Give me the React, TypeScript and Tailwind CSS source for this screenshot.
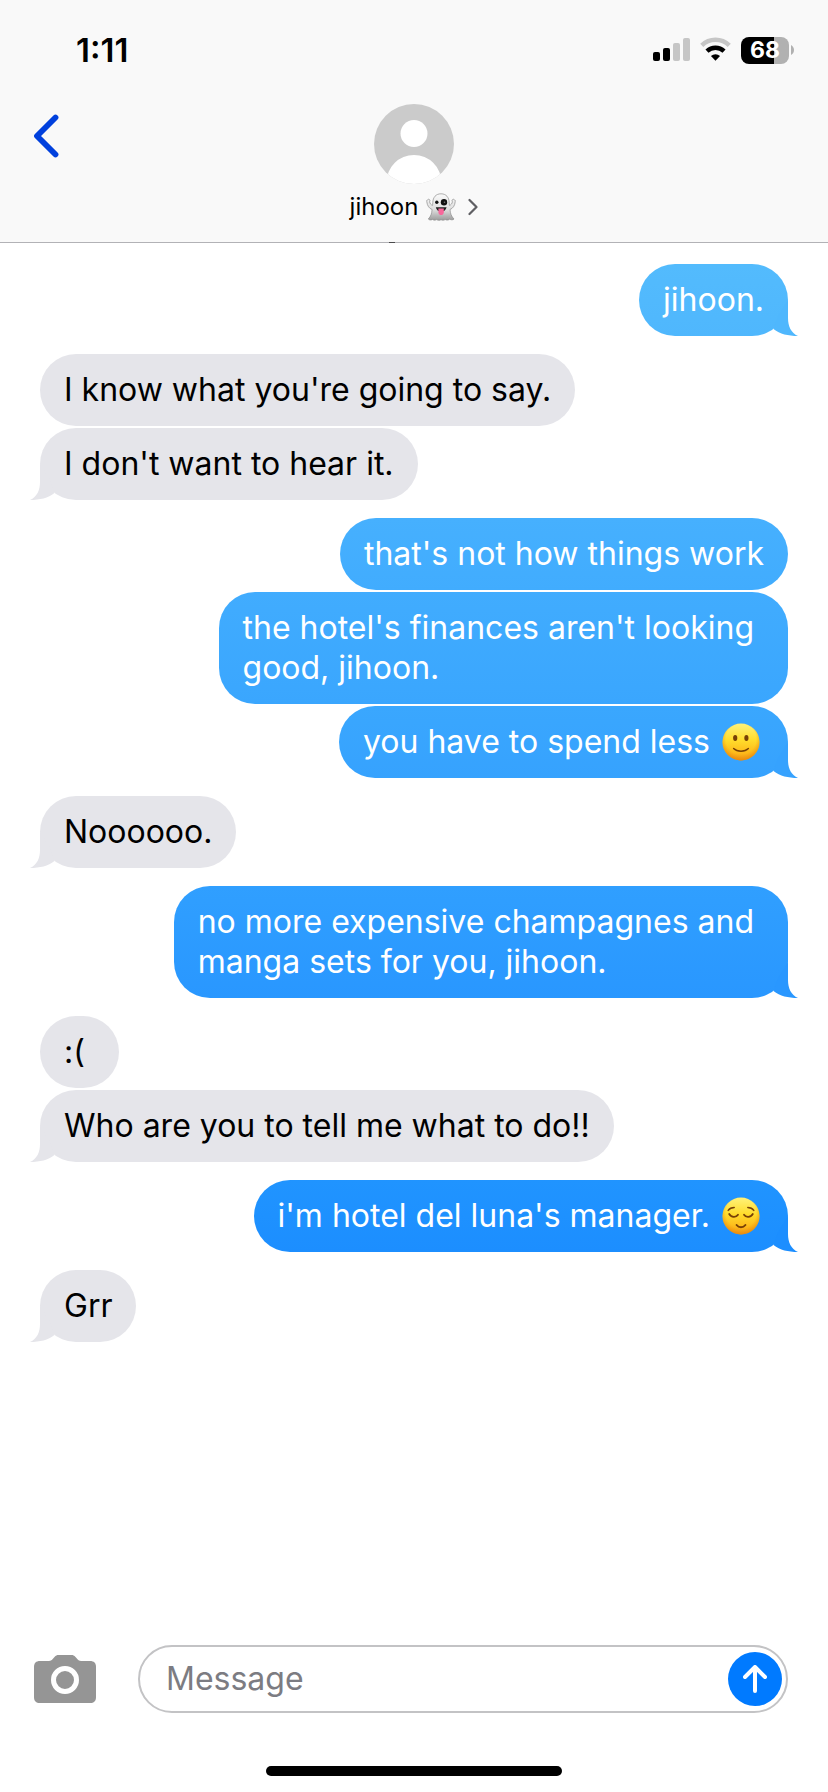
import { useState } from "react";

// ------------------------------------------------------------
// Data
// ------------------------------------------------------------

type EmojiName = "smile" | "relieved";

type Message = {
  text: string;
  emoji?: EmojiName;
  bg?: string;
  tail?: string;
};

type Group = {
  from: "me" | "them";
  messages: Message[];
};

const GROUPS: Group[] = [
  {
    from: "me",
    messages: [
      { text: "jihoon.", bg: "from-[#53bbfd] to-[#4fb7fd]", tail: "text-[#4fb7fd]" },
    ],
  },
  {
    from: "them",
    messages: [
      { text: "I know what you're going to say." },
      { text: "I don't want to hear it." },
    ],
  },
  {
    from: "me",
    messages: [
      { text: "that's not how things work", bg: "from-[#46b0fe] to-[#41acfe]" },
      {
        text: "the hotel's finances aren't looking\ngood, jihoon.",
        bg: "from-[#41acfe] to-[#3aa6fe]",
      },
      {
        text: "you have to spend less",
        emoji: "smile",
        bg: "from-[#3aa7fe] to-[#36a2fe]",
        tail: "text-[#36a2fe]",
      },
    ],
  },
  { from: "them", messages: [{ text: "Noooooo." }] },
  {
    from: "me",
    messages: [
      {
        text: "no more expensive champagnes and\nmanga sets for you, jihoon.",
        bg: "from-[#309fff] to-[#2997ff]",
        tail: "text-[#2997ff]",
      },
    ],
  },
  {
    from: "them",
    messages: [{ text: ":(" }, { text: "Who are you to tell me what to do!!" }],
  },
  {
    from: "me",
    messages: [
      {
        text: "i'm hotel del luna's manager.",
        emoji: "relieved",
        bg: "from-[#2094ff] to-[#1c8eff]",
        tail: "text-[#1c8eff]",
      },
    ],
  },
  { from: "them", messages: [{ text: "Grr" }] },
];

// ------------------------------------------------------------
// Emoji
// ------------------------------------------------------------

function Emoji({ name }: { name: EmojiName }) {
  return (
    <svg
      viewBox="0 0 38 38"
      role="img"
      aria-label={name === "smile" ? "🙂" : "😌"}
      className="mr-1 ml-3 size-[38px] shrink-0"
    >
      <defs>
        <linearGradient id={`${name}-face`} x1="0" y1="0" x2="0" y2="1">
          <stop offset="0" stopColor="#fff27a" />
          <stop offset="0.45" stopColor="#ffdc2c" />
          <stop offset="0.8" stopColor="#fdb91a" />
          <stop offset="1" stopColor="#f09a18" />
        </linearGradient>
        <radialGradient id={`${name}-edge`} cx="0.5" cy="0.42" r="0.58">
          <stop offset="0.7" stopColor="#f09a10" stopOpacity="0" />
          <stop offset="1" stopColor="#e88408" stopOpacity="0.8" />
        </radialGradient>
      </defs>
      <circle cx="19" cy="19" r="18.5" fill={`url(#${name}-face)`} />
      <circle cx="19" cy="19" r="18.5" fill={`url(#${name}-edge)`} />
      {name === "smile" ? (
        <>
          <ellipse cx="13.2" cy="15" rx="2.1" ry="3" fill="#774006" />
          <ellipse cx="24.4" cy="15" rx="2.1" ry="3" fill="#774006" />
          <path
            d="M11.6 25.6c3.6 3.6 11.2 3.6 14.8 0"
            fill="none"
            stroke="#774006"
            strokeWidth="1.4"
            strokeLinecap="round"
          />
        </>
      ) : (
        <g fill="none" stroke="#774006" strokeWidth="1.5" strokeLinecap="round">
          <path d="M6.200 13.400c1.400-2 3.400-3 6-3M31.800 13.400c-1.400-2-3.400-3-6-3" />
          <path d="M7.200 17c2 3.600 7 3.600 8.800.8M30.800 17c-2 3.600-7 3.600-8.800.8" strokeWidth="1.8" />
          <path d="M14.6 28c2.400 3 6.400 3 8.800 0" strokeWidth="2" />
        </g>
      )}
    </svg>
  );
}

function Ghost() {
  return (
    <svg viewBox="0 0 30 28" role="img" aria-label="👻" className="h-7 w-[30px]">
      <defs>
        <linearGradient id="ghost" x1="0" y1="0" x2="0" y2="1">
          <stop offset="0" stopColor="#fafafa" />
          <stop offset="0.6" stopColor="#dedede" />
          <stop offset="1" stopColor="#9b9b9b" />
        </linearGradient>
      </defs>
      <path
        d="M15 .8c5.2 0 8 3.6 8.2 8.6l.2 3c1.700-.6 2.700-1.800 3-3.600-.7-1.200-.4-2.400.5-2.200.6-.6 1.200-.2 1.300.3.900-.1 1.300.8 1 1.800-.3 4-2.400 6.800-5.200 7.800.3 4 1.400 7 4 9.500-1.300 1.300-3.200.8-4.400.2-1.400 1.100-3.100 1.100-4.400.3-1.300.9-3 .9-4.200.2-1.400.8-3.200.8-4.500-.1-1.300.8-2.900.7-4-.2-1.300.7-3 .9-4.200-.4 2.500-2.500 3.500-5.500 3.800-9.500C3.200 15.500 1.200 12.700.8 8.700c-.3-1 .1-1.900 1-1.800.1-.5.700-.9 1.300-.3.900-.2 1.200 1 .5 2.200.3 1.800 1.300 3 3 3.600l.2-3C7 4.400 9.800.8 15 .8Z"
        fill="url(#ghost)"
        stroke="#8d8d8d"
        strokeWidth="0.7"
      />
      <circle cx="10.800" cy="9.200" r="1.700" fill="#111" />
      <circle cx="18" cy="9.200" r="3.200" fill="#111" />
      <circle cx="18.500" cy="9.200" r="0.8" fill="#777" />
      <path d="M9.800 14.200h10.800c-.6 2.700-2.600 4.300-5.400 4.300s-4.800-1.600-5.400-4.300Z" fill="#222" />
      <path d="M12.400 15.400h5.400v3.800c0 1.800-1.200 2.900-2.700 2.900s-2.700-1.100-2.700-2.900Z" fill="#f7689b" />
    </svg>
  );
}

// ------------------------------------------------------------
// Header
// ------------------------------------------------------------

function StatusBar() {
  return (
    <div className="flex h-8 items-center justify-between pr-[34px] pl-[76px]">
      <span className="text-[33px] leading-8 font-semibold">1:11</span>
      <div className="flex items-center gap-[10px]">
        <svg viewBox="0 0 37 28" className="h-7 w-[37px]" aria-hidden="true">
          <rect x="0" y="16" width="7" height="9" rx="2" />
          <rect x="10" y="12" width="7" height="13" rx="2" />
          <rect x="20" y="7" width="7" height="18" rx="2" fill="#c6c6c6" />
          <rect x="30" y="2" width="7" height="23" rx="2" fill="#c6c6c6" />
        </svg>
        <svg viewBox="0 0 32 28" className="h-7 w-[31px]" aria-hidden="true">
          <g fill="none" strokeWidth="4.600">
            <path d="M1.800 9.200a20.500 20.500 0 0 1 28.400 0" stroke="#c6c6c6" />
            <path d="M7.200 15.200a12.800 12.800 0 0 1 17.600 0" stroke="#000" />
          </g>
          <path d="M16 25.200l-4.700-4.900a7 7 0 0 1 9.400 0Z" />
        </svg>
        <div className="flex items-center gap-[2px]">
          <div className="flex h-[27px] w-12 items-center justify-center rounded-lg bg-linear-to-r from-black from-69% to-[#b1b1b1] to-69%">
            <span className="text-[23px] leading-6 font-bold text-white">68</span>
          </div>
          <svg viewBox="0 0 3 10" className="h-[10px] w-[3px]" aria-hidden="true">
            <path d="M0 0c4 2 4 8 0 10Z" fill="#b1b1b1" />
          </svg>
        </div>
      </div>
    </div>
  );
}

function Header() {
  return (
    <header className="relative border-b border-[#b2b2b6] bg-[#f9f9f9] pt-[34px]">
      <StatusBar />
      <div className="mt-[38px] grid grid-cols-[1fr_auto_1fr] items-start px-8 pb-5">
        <button type="button" aria-label="Back" className="mt-[10px] w-7">
          <svg viewBox="0 0 28 44" className="h-11 w-7">
            <path
              d="M23.500 3.500L5 22l18.500 18.500"
              fill="none"
              stroke="#0040dd"
              strokeWidth="5.800"
              strokeLinecap="round"
              strokeLinejoin="round"
            />
          </svg>
        </button>
        <button type="button" className="flex flex-col items-center gap-2">
          <svg viewBox="0 0 80 80" className="size-20" aria-hidden="true">
            <clipPath id="avatar">
              <circle cx="40" cy="40" r="40" />
            </clipPath>
            <g clipPath="url(#avatar)">
              <rect width="80" height="80" fill="#cbcbcb" />
              <circle cx="40" cy="29.500" r="13.500" fill="#fff" />
              <circle cx="40" cy="78.500" r="27.500" fill="#fff" />
            </g>
          </svg>
          <span className="flex h-[30px] items-center">
            <span className="text-[24px] leading-[30px]">jihoon</span>
            <span className="ml-2 flex">
              <Ghost />
            </span>
            <svg viewBox="0 0 10 18" className="ml-3 h-[18px] w-[10px]" aria-hidden="true">
              <path
                d="M1.500 2l7 7-7 7"
                fill="none"
                stroke="#5f5f63"
                strokeWidth="2.200"
                strokeLinecap="round"
                strokeLinejoin="round"
              />
            </svg>
          </span>
        </button>
      </div>
      {/* edge of the timestamp scrolled under the header */}
      <span className="absolute -bottom-px left-[47%] h-px w-[6px] bg-[#4a4a4c]" aria-hidden="true" />
    </header>
  );
}

// ------------------------------------------------------------
// Bubbles
// ------------------------------------------------------------

function Tail({ mine, color }: { mine: boolean; color: string }) {
  return (
    <svg
      viewBox="0 0 46 36"
      aria-hidden="true"
      className={`absolute bottom-0 h-9 w-[46px] ${color} ${
        mine ? "-right-[10px]" : "-left-[10px] -scale-x-100"
      }`}
    >
      <path d="M21.500 29L26 16 36 0v18c0 8 3 15 10 18-10 0-18-2-24.500-7Z" fill="currentColor" />
    </svg>
  );
}

function Bubble({ message, mine, last }: { message: Message; mine: boolean; last: boolean }) {
  const multiline = message.text.includes("\n");

  return (
    <div
      className={`relative flex min-w-[79px] items-center rounded-[36px] py-4 pl-6 whitespace-pre-line ${
        multiline ? "pr-[34px]" : "pr-6"
      } ${mine ? `bg-linear-to-b text-white ${message.bg}` : "bg-[#e5e5ea] text-black"}`}
    >
      {last && <Tail mine={mine} color={mine ? message.tail ?? "" : "text-[#e5e5ea]"} />}
      <p>{message.text}</p>
      {message.emoji && <Emoji name={message.emoji} />}
    </div>
  );
}

// ------------------------------------------------------------
// Composer
// ------------------------------------------------------------

function Composer() {
  const [value, setValue] = useState("");

  return (
    <form
      className="flex items-center gap-[42px] pr-10 pl-[34px]"
      onSubmit={(e) => {
        e.preventDefault();
        setValue("");
      }}
    >
      <button type="button" aria-label="Camera">
        <svg viewBox="0 0 62 48" className="h-12 w-[62px]">
          <path
            d="M6 6h9c1.500 0 2.500-.6 3.500-1.700l2-2.300C21.800.5 23 0 24.500 0h13c1.500 0 2.700.5 4 2l2 2.300C44.500 5.400 45.500 6 47 6h9c4 0 6 2 6 6v30c0 4-2 6-6 6H6c-4 0-6-2-6-6V12c0-4 2-6 6-6Z"
            fill="#959595"
          />
          <circle cx="31" cy="25" r="11.500" fill="none" stroke="#fff" strokeWidth="5" />
        </svg>
      </button>
      <div className="flex h-[68px] flex-1 items-center rounded-full border-2 border-[#c3c3c5] pr-1 pl-[26px]">
        <input
          type="text"
          aria-label="Message"
          placeholder="Message"
          value={value}
          onChange={(e) => setValue(e.target.value)}
          className="min-w-0 flex-1 bg-transparent leading-10 outline-none placeholder:text-[#7c7c82]"
        />
        <button
          type="submit"
          aria-label="Send"
          className="flex size-[54px] items-center justify-center rounded-full bg-[#007aff]"
        >
          <svg viewBox="0 0 24 28" className="h-7 w-6">
            <path
              d="M12 26V2.500M2 12L12 2l10 10"
              fill="none"
              stroke="#fff"
              strokeWidth="4"
              strokeLinecap="round"
              strokeLinejoin="round"
            />
          </svg>
        </button>
      </div>
    </form>
  );
}

export default function App() {
  return (
    <div className="flex min-h-screen flex-col bg-white font-[Inter,'Liberation_Sans',sans-serif] text-[32px] leading-10 text-black">
      <Header />
      <main className="flex flex-1 flex-col gap-[18px] px-10 pt-[21px] pb-8">
        {GROUPS.map((group, i) => {
          const mine = group.from === "me";
          return (
            <div key={i} className={`flex flex-col gap-[2px] ${mine ? "items-end" : "items-start"}`}>
              {group.messages.map((message, j) => (
                <Bubble
                  key={j}
                  message={message}
                  mine={mine}
                  last={j === group.messages.length - 1}
                />
              ))}
            </div>
          );
        })}
      </main>
      <Composer />
      <div className="mx-auto mt-[53px] mb-4 h-[10px] w-[296px] rounded-full bg-black" />
    </div>
  );
}
